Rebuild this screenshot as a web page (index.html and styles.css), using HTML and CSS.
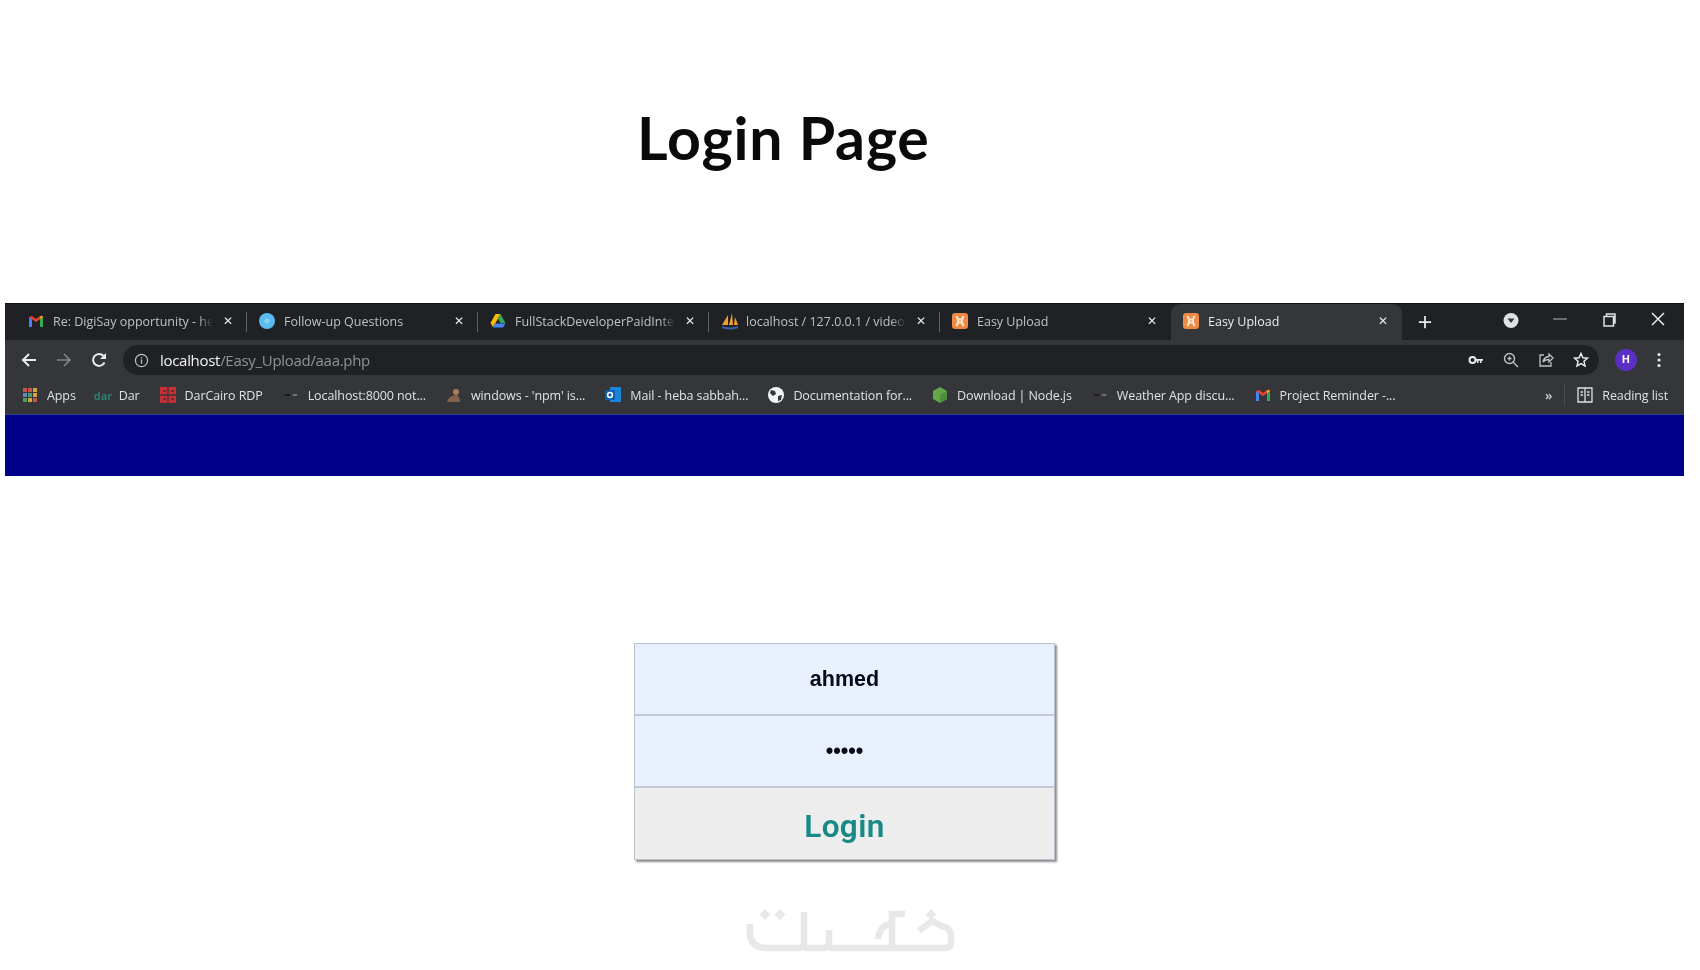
FILE: index.html
```html
<!DOCTYPE html>
<html lang="en">
<head>
<meta charset="utf-8">
<title>Login Page</title>
<link rel="stylesheet" href="styles.css">
</head>
<body>
<svg class="defs" aria-hidden="true">
  <symbol id="gmail" viewBox="0 0 16 16">
    <path d="M1 14V4l3 2v8z" fill="#4285f4"/>
    <path d="M15 14V4l-3 2v8z" fill="#34a853"/>
    <path d="M1 4l7 5 7-5-3-1-4 3-4-3z" fill="#ea4335"/>
    <path d="M12 6l3-2-1-1.500-2 1.500z" fill="#fbbc04"/>
  </symbol>
  <symbol id="xampp" viewBox="0 0 16 16">
    <rect width="16" height="16" rx="3" fill="#ee8a45"/>
    <path d="M4.500 3l1.500 3.500h4L11.500 3M4.500 13l1.500-3.500h4l1.500 3.500M6 6.500v3M10 6.500v3" fill="none" stroke="#fbe3cc" stroke-width="2"/>
  </symbol>
  <symbol id="dash" viewBox="0 0 18 16">
    <path d="M2 8h6" stroke="#1a1a1a" stroke-width="2"/>
    <path d="M11 8h5" stroke="#77797d" stroke-width="2"/>
  </symbol>
</svg>

<main class="page">
  <h1 class="title">Login Page</h1>

  <section class="browser" aria-label="Browser window">
    <div class="tabstrip">
      <div class="tab"><svg class="fav"><use href="#gmail"/></svg><span class="tab-label">Re: DigiSay opportunity - he</span><span class="tab-x">✕</span></div>
      <div class="tab"><svg class="fav" viewBox="0 0 16 16"><circle cx="8" cy="8" r="8" fill="#5bbcf0"/><path d="M5 8l3-3 3 3-3 3z" fill="#8ed4f7"/></svg><span class="tab-label">Follow-up Questions</span><span class="tab-x">✕</span></div>
      <div class="tab"><svg class="fav" viewBox="0 0 16 16"><path d="M5.500 1h5l-5 9-2.500 4-2.500-4z" fill="#fbbc04"/><path d="M10.500 1l5 9h-5l-2.500-4.500z" fill="#34a853"/><path d="M5 10.500h10.500l-2.500 4H3z" fill="#4285f4"/></svg><span class="tab-label">FullStackDeveloperPaidInte</span><span class="tab-x">✕</span></div>
      <div class="tab"><svg class="fav fav-pma" viewBox="0 0 18 18"><path d="M1 13L7 3v10zM8 13l3-12 1 12zM13 13l1-8 3 8z" fill="#f0a030"/><path d="M1 15q8 3 16 0" fill="none" stroke="#3b5a9a" stroke-width="2"/></svg><span class="tab-label">localhost / 127.0.0.1 / video</span><span class="tab-x">✕</span></div>
      <div class="tab"><svg class="fav"><use href="#xampp"/></svg><span class="tab-label">Easy Upload</span><span class="tab-x">✕</span></div>
      <div class="tab tab-active"><svg class="fav"><use href="#xampp"/></svg><span class="tab-label">Easy Upload</span><span class="tab-x">✕</span></div>
      <svg class="newtab" viewBox="0 0 16 16"><path d="M8 1v14M1 8h14" stroke="#e8eaed" stroke-width="2"/></svg>
      <div class="winctl">
        <svg class="win-ic" viewBox="0 0 16 16"><circle cx="8" cy="8.500" r="7.500" fill="#dfe1e5"/><path d="M4.500 6.500h7L8 11z" fill="#35363a"/></svg>
        <svg class="win-ic" viewBox="0 0 16 16"><path d="M1 7h14" stroke="#80848a" stroke-width="1.500"/></svg>
        <svg class="win-ic" viewBox="0 0 16 16"><path d="M3 4.500h9.500V14H3z M5.500 4.500V2H14v9h-1.500" fill="none" stroke="#dfe1e5" stroke-width="1.500"/></svg>
        <svg class="win-ic" viewBox="0 0 16 16"><path d="M2 1l12 12M14 1L2 13" stroke="#e8eaed" stroke-width="1.500"/></svg>
      </div>
    </div>

    <div class="toolbar">
      <svg class="tb-ic" viewBox="0 0 16 16"><path d="M15 8H2M8 2L2 8l6 6" fill="none" stroke="#e8eaed" stroke-width="2"/></svg>
      <svg class="tb-ic" viewBox="0 0 16 16"><path d="M1 8h13M8 2l6 6-6 6" fill="none" stroke="#83868b" stroke-width="1.600"/></svg>
      <svg class="tb-ic" viewBox="0 0 16 16"><path d="M13.500 10.500A6 6 0 1 1 12.500 3.800" fill="none" stroke="#e8eaed" stroke-width="2"/><path d="M15 1v6H9z" fill="#e8eaed"/></svg>
      <div class="omnibox">
        <svg class="info" viewBox="0 0 16 16"><circle cx="8" cy="8" r="6.500" fill="none" stroke="#bdc1c6" stroke-width="1.300"/><path d="M8 7v4.500M8 4.500v1.300" stroke="#bdc1c6" stroke-width="1.400"/></svg>
        <span class="url"><span class="url-host">localhost</span>/Easy_Upload/aaa.php</span>
        <div class="omni-actions">
          <svg class="omni-ic" viewBox="0 0 16 16"><circle cx="4.500" cy="8" r="3" fill="none" stroke="#e8eaed" stroke-width="2"/><path d="M7 7h8v1.800h-1.500V11H12V8.800h-1.500V11H9V8.800H7z" fill="#e8eaed"/></svg>
          <svg class="omni-ic" viewBox="0 0 16 16"><circle cx="6.500" cy="6.500" r="5" fill="none" stroke="#bdc1c6" stroke-width="1.400"/><path d="M10 10l5 5M4.500 6.500h4M6.500 4.500v4" stroke="#bdc1c6" stroke-width="1.400"/></svg>
          <svg class="omni-ic" viewBox="0 0 16 16"><path d="M6 3H2v11h11v-4" fill="none" stroke="#bdc1c6" stroke-width="1.300"/><path d="M5 10q1-5 6-5.500V2l4 4-4 4V7.500q-4 0-6 2.500z" fill="none" stroke="#bdc1c6" stroke-width="1.300"/></svg>
          <svg class="omni-ic" viewBox="0 0 16 16"><path d="M8 1.500l1.900 4.300 4.600.4-3.500 3.100 1 4.600L8 11.500l-4 2.400 1-4.600-3.500-3.100 4.600-.4z" fill="none" stroke="#e8eaed" stroke-width="1.500"/></svg>
        </div>
      </div>
      <div class="avatar">H</div>
      <svg class="dots" viewBox="0 0 4 16"><circle cx="2" cy="2.500" r="1.600" fill="#e8eaed"/><circle cx="2" cy="8" r="1.600" fill="#e8eaed"/><circle cx="2" cy="13.500" r="1.600" fill="#e8eaed"/></svg>
    </div>

    <div class="bookmarks">
      <div class="bm"><svg class="bm-ic" viewBox="0 0 16 16"><g><rect x="1" y="1" width="4" height="4" fill="#c9544a"/><rect x="6" y="1" width="4" height="4" fill="#c9544a"/><rect x="11" y="1" width="4" height="4" fill="#d2a63a"/><rect x="1" y="6" width="4" height="4" fill="#5a86c8"/><rect x="6" y="6" width="4" height="4" fill="#4f9a62"/><rect x="11" y="6" width="4" height="4" fill="#d2a63a"/><rect x="1" y="11" width="4" height="4" fill="#4f9a62"/><rect x="6" y="11" width="4" height="4" fill="#d2a63a"/><rect x="11" y="11" width="4" height="4" fill="#c9544a"/></g></svg>Apps</div>
      <div class="bm"><span class="bm-dar">dar</span>Dar</div>
      <div class="bm"><svg class="bm-ic" viewBox="0 0 16 16"><rect width="16" height="16" fill="#c62f35"/><path d="M8 0v16M0 8h16M3 4h3M11 4h3M3 12h3M11 12h3" stroke="#35363a" stroke-width="1.300"/></svg>DarCairo RDP</div>
      <div class="bm"><svg class="bm-ic" viewBox="0 0 18 16"><use href="#dash"/></svg>Localhost:8000 not...</div>
      <div class="bm"><svg class="bm-ic" viewBox="0 0 16 16"><circle cx="10" cy="5" r="3" fill="#a97c55"/><path d="M1 15q2-7 10-7 3 2 3 7z" fill="#84634a"/></svg>windows - 'npm' is...</div>
      <div class="bm"><svg class="bm-ic" viewBox="0 0 16 16"><rect x="5" y="0" width="11" height="15" rx="1" fill="#1a86d9"/><rect x="0" y="3" width="10" height="10" rx="1" fill="#0f5fb0"/><circle cx="5" cy="8" r="2.400" fill="none" stroke="#fff" stroke-width="1.500"/></svg>Mail - heba sabbah...</div>
      <div class="bm"><svg class="bm-ic" viewBox="0 0 16 16"><circle cx="8" cy="8" r="8" fill="#f1f3f4"/><path d="M3 3l4 1 1 3-3 2-3-3zM10 9l4-1-1 5-3 1z" fill="#35363a"/></svg>Documentation for...</div>
      <div class="bm"><svg class="bm-ic" viewBox="0 0 16 16"><path d="M8 0l7 4v8l-7 4-7-4V4z" fill="#62a84a"/><path d="M8 8l7-4v8l-7 4z" fill="#4b8f3a"/></svg>Download | Node.js</div>
      <div class="bm"><svg class="bm-ic" viewBox="0 0 18 16"><use href="#dash"/></svg>Weather App discu...</div>
      <div class="bm"><svg class="bm-ic"><use href="#gmail"/></svg>Project Reminder -...</div>
      <div class="bm-end">
        <span class="bm-more">»</span>
        <span class="bm-sep"></span>
        <div class="bm"><svg class="bm-ic" viewBox="0 0 16 16"><path d="M1 1h14v14H1zM8 1v14M3.500 5h2.500M3.500 8h2.500M10 5h2.500M10 8h2.500" fill="none" stroke="#dfe1e5" stroke-width="1.300"/></svg>Reading list</div>
      </div>
    </div>
    <div class="bluebar"></div>
  </section>

  <form class="login">
    <input class="field" type="text" value="ahmed" aria-label="Username">
    <input class="field" type="password" value="12345" aria-label="Password">
    <button class="submit" type="button">Login</button>
  </form>

  <svg class="watermark" viewBox="0 0 240 60" role="img" aria-label="Khamsat logo">
    <g fill="none" stroke="#e8e8e8" stroke-width="6.500">
      <path d="M20 23v9q0 15 18 15h30q6 0 6-6V11"/>
      <path d="M74 47h19q6 0 6-6V29"/>
      <path d="M99 47h64"/>
      <path d="M148 38q2-15 15-15"/>
      <path d="M162 50V13h13"/>
      <path d="M163 47h52q6 0 6-6v-6q0-8-9-10l-10-5-13 10"/>
    </g>
    <g fill="#e8e8e8">
      <path d="M35 8l5.500 5.500-5.500 5.500-5.500-5.500zM50 8l5.500 5.500-5.500 5.500-5.500-5.500zM201 8l5.500 5.500-5.500 5.500-5.500-5.500z"/>
    </g>
  </svg>
</main>
</body>
</html>
```

FILE: styles.css
```css
* { box-sizing: border-box; }
html, body { margin: 0; padding: 0; background: #fff; }
body { width: 1700px; height: 970px; overflow: hidden; font-family: "Open Sans", "Liberation Sans", sans-serif; }
.defs { width: 0; height: 0; display: block; }
.page { display: flex; flex-direction: column; align-items: flex-start; }

.title {
  margin: 102px 0 0 637px;
  font: 700 59px/72px Lato, "Open Sans", sans-serif;
  letter-spacing: 0.85px;
  color: #0a0a0a;
  filter: blur(0.3px);
}

.browser { width: 1679px; margin: 129px 0 0 5px; filter: blur(0.5px); }

.tabstrip { height: 37px; background: #202124; display: flex; align-items: stretch; padding-left: 11px; border-top: 1px solid #111; }
.tab { width: 231px; display: flex; align-items: center; padding: 0 0 2px 12px; color: #bdc1c6; font-size: 12.5px; position: relative; white-space: nowrap; }
.tab::after { content: ""; position: absolute; right: 0; top: 8px; bottom: 8px; width: 1px; background: #5f6368; }
.tab:nth-child(5)::after, .tab-active::after { display: none; }
.tab-active { background: #35363a; border-radius: 9px 9px 0 0; color: #e8eaed; }
.fav { width: 16px; height: 16px; flex: none; }
.fav-pma { width: 18px; height: 18px; margin-right: -2px; }
.tab-label { margin-left: 9px; width: 160px; overflow: hidden; flex: none; -webkit-mask-image: linear-gradient(to right, #000 145px, transparent 160px); mask-image: linear-gradient(to right, #000 145px, transparent 160px); }
.tab-x { margin-left: 8px; color: #e8eaed; font: 700 12px "DejaVu Sans", sans-serif; width: 14px; text-align: center; }
.newtab { width: 14px; height: 14px; margin: 11px 0 0 16px; flex: none; }
.winctl { display: flex; margin-left: 71px; gap: 33px; padding-top: 8px; }
.win-ic { width: 16px; height: 16px; }

.toolbar { height: 40px; background: #35363a; display: flex; align-items: center; padding-left: 16px; gap: 19px; }
.tb-ic { width: 16px; height: 16px; flex: none; }
.omnibox { width: 1476px; height: 30px; margin-left: -3px; background: #202124; border-radius: 15px; display: flex; align-items: center; padding: 0 10px 0 11px; flex: none; }
.info { width: 15px; height: 15px; flex: none; }
.url { margin-left: 11px; font-size: 15px; letter-spacing: -0.3px; color: #8f9398; white-space: nowrap; }
.url-host { color: #f1f3f4; }
.omni-actions { margin-left: auto; display: flex; gap: 19px; }
.omni-ic { width: 16px; height: 16px; }
.avatar { width: 22px; height: 22px; margin-left: -3px; border-radius: 50%; background: #5b2fc4; color: #fff; font: 700 11px/22px Roboto, sans-serif; text-align: center; flex: none; }
.dots { width: 4px; height: 16px; margin-left: 1px; flex: none; }

.bookmarks { height: 35px; background: #35363a; display: flex; align-items: center; padding: 0 16px 4px 17px; gap: 20px; border-bottom: 1px solid #33418a; color: #dfe1e5; font-size: 12.5px; letter-spacing: -0.1px; white-space: nowrap; }
.bm { display: flex; align-items: center; gap: 9px; }
.bm-ic { width: 16px; height: 16px; flex: none; }
.bm-dar { width: 16px; margin-left: -2px; color: #2f7d6d; font-size: 11px; font-weight: 700; }
.bm-end { margin-left: auto; display: flex; align-items: center; }
.bm-more { color: #bdc1c6; font-size: 12px; font-weight: 700; }
.bm-sep { width: 1px; height: 22px; background: #4a4b4f; margin: 0 12px; }

.bluebar { height: 61px; background: #00008b; }

.login {
  width: 421px;
  margin: 167px 0 0 634px;
  display: flex;
  flex-direction: column;
  border: 1px solid #bcc2cc;
  box-shadow: 2px 2px 2px #8b8b8b;
  filter: blur(0.3px);
}
.field {
  height: 72px;
  background: #e8f0fe;
  border: 0;
  border-bottom: 2px solid #c3cad6;
  text-align: center;
  color: #0a0a14;
  font: 700 21.5px "Liberation Sans", sans-serif;
  padding: 0;
  width: 100%;
}
.submit {
  height: 71px;
  background: #ededed;
  border: 0;
  color: #178a86;
  font: 600 31.5px Roboto, sans-serif;
  letter-spacing: 0.4px;
  padding: 5px 0 0;
}

.watermark { width: 240px; height: 60px; margin: 41px 0 0 730px; flex: none; filter: blur(0.4px); }
```
